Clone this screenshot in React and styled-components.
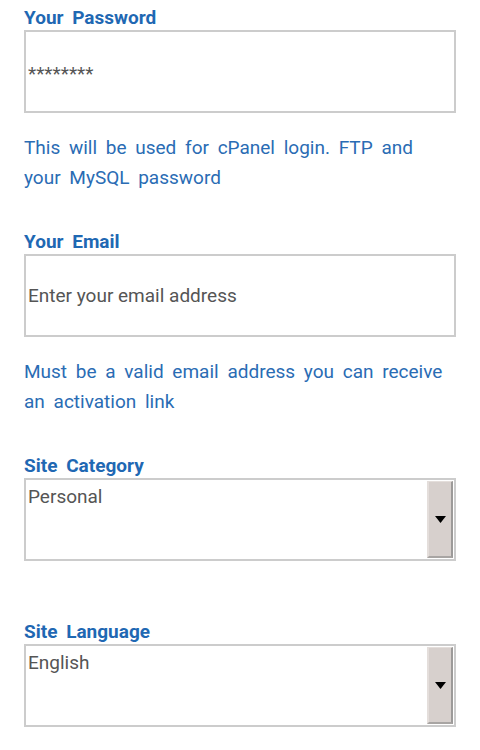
import React, { useState } from "react";
import styled, { createGlobalStyle } from "styled-components";

const GlobalStyle = createGlobalStyle`
  body {
    margin: 0;
    background: #ffffff;
    font-family: Roboto, "Liberation Sans", sans-serif;
  }
`;

const SForm = styled.form`
  padding: 8px 24px 0 24px;
  width: 432px;
`;

const SField = styled.div`
  margin-bottom: ${(p) => p.gap || 0}px;
`;

const SLabel = styled.label`
  display: block;
  height: 20px;
  line-height: 20px;
  margin-bottom: 2px;
  font-size: 19px;
  font-weight: 700;
  color: #1f68b3;
  word-spacing: 4px;
`;

const SInput = styled.input`
  display: block;
  box-sizing: border-box;
  width: 432px;
  height: 83px;
  margin: 0;
  padding: ${(p) => (p.shift ? "4px 2px 0 2px" : "0 2px")};
  border: 2px solid #cccccc;
  outline: none;
  font-family: Roboto, "Liberation Sans", sans-serif;
  font-size: 19px;
  color: #555555;
  background: #ffffff;

  &::placeholder {
    color: #555555;
  }
`;

const SHelp = styled.p`
  margin: 20px 0 0 0;
  font-size: 19px;
  line-height: 30px;
  color: #2a6cb4;
  word-spacing: 4px;
`;

const SSelectBox = styled.div`
  position: relative;
  box-sizing: border-box;
  width: 432px;
  height: 83px;
  border: 2px solid #cccccc;
  background: #ffffff;
`;

const SSelectText = styled.div`
  padding: 5px 0 0 2px;
  font-size: 19px;
  line-height: 24px;
  color: #555555;
`;

const SArrowButton = styled.div`
  position: absolute;
  top: 1px;
  right: 1px;
  bottom: 1px;
  width: 22px;
  display: flex;
  align-items: center;
  justify-content: center;
  background: #d7d0cd;
  border-left: 2px solid #e4dedb;
  border-top: 1px solid #e4dedb;
  border-right: 2px solid #9c9a99;
  border-bottom: 2px solid #a8a5a3;
`;

function Arrow() {
  return (
    <svg width="11" height="7" viewBox="0 0 11 7">
      <path d="M0 0 H11 L5.5 7 Z" fill="#000000" />
    </svg>
  );
}

function Select({ value }) {
  return (
    <SSelectBox>
      <SSelectText>{value}</SSelectText>
      <SArrowButton>
        <Arrow />
      </SArrowButton>
    </SSelectBox>
  );
}

export default function App() {
  const [password, setPassword] = useState("********");
  const [email, setEmail] = useState("");

  return (
    <>
      <GlobalStyle />
      <SForm onSubmit={(e) => e.preventDefault()}>
        <SField gap={39}>
          <SLabel htmlFor="password">Your Password</SLabel>
          <SInput
            id="password"
            type="text"
            shift
            value={password}
            onChange={(e) => setPassword(e.target.value)}
          />
          <SHelp>
            This will be used for cPanel login. FTP and
            <br />
            your MySQL password
          </SHelp>
        </SField>
        <SField gap={39}>
          <SLabel htmlFor="email">Your Email</SLabel>
          <SInput
            id="email"
            type="email"
            placeholder="Enter your email address"
            value={email}
            onChange={(e) => setEmail(e.target.value)}
          />
          <SHelp>
            Must be a valid email address you can receive
            <br />
            an activation link
          </SHelp>
        </SField>
        <SField gap={61}>
          <SLabel>Site Category</SLabel>
          <Select value="Personal" />
        </SField>
        <SField>
          <SLabel>Site Language</SLabel>
          <Select value="English" />
        </SField>
      </SForm>
    </>
  );
}
